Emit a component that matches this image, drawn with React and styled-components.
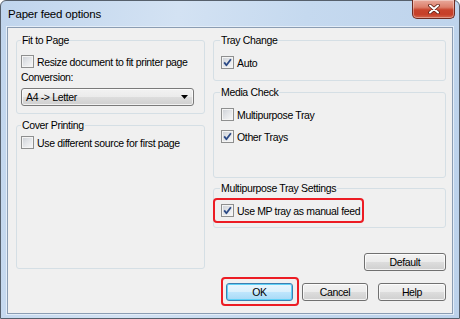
import React from 'react';
import styled, { createGlobalStyle } from 'styled-components';

const GlobalStyle = createGlobalStyle`
  html, body { margin: 0; padding: 0; background: #ffffff; }
  body { font-family: "Liberation Sans", Arial, sans-serif; color: #000; }
`;

const Window = styled.div`
  box-sizing: border-box;
  width: 460px;
  height: 319px;
  display: flex;
  flex-direction: column;
  border: 1px solid #56606c;
  border-radius: 6px 6px 0 0;
  background: linear-gradient(100deg, #c0d5ed 0%, #d3e2f3 35%, #c5d9ef 60%, #bcd2eb 100%);
`;

const TitleBar = styled.div`
  height: 26px;
  display: flex;
  justify-content: space-between;
  align-items: flex-start;
  padding-left: 7px;
  padding-right: 4px;
`;

const Title = styled.div`
  font-size: 11.5px;
  line-height: 12px;
  letter-spacing: -0.2px;
  margin-top: 7px;
`;

const CloseButton = styled.div`
  box-sizing: border-box;
  width: 43px;
  height: 19px;
  margin-top: -1px;
  display: flex;
  align-items: center;
  justify-content: center;
  border: 1px solid #6e2a20;
  border-top: none;
  border-radius: 0 0 5px 5px;
  background: linear-gradient(180deg, #e9a99b 0%, #dc7f6b 40%, #c8432c 55%, #c63f28 80%, #d5664c 100%);
  box-shadow: inset 0 0 0 1px rgba(255, 255, 255, 0.35);
`;

const Client = styled.div`
  flex: 1;
  margin: 0 6px 4px 6px;
  padding: 6px 6px 0 8px;
  background: #f0f0f0;
  border: 1px solid #8b9db3;
  box-shadow: 0 0 0 1px #e3edf8;
  display: flex;
  flex-direction: column;
`;

const Columns = styled.div`
  display: flex;
  gap: 8px;
`;

const Column = styled.div`
  width: ${p => p.$w}px;
  display: flex;
  flex-direction: column;
`;

const Group = styled.fieldset`
  box-sizing: border-box;
  min-width: 0;
  height: ${p => p.$h}px;
  margin: ${p => p.$mt || 0}px 0 0 0;
  padding: 0 6px 0 ${p => p.$pl}px;
  border: 1px solid #d5dfe5;
  border-radius: 3px;
`;

const Legend = styled.legend`
  padding: 0 1px;
  margin-left: ${p => p.$ml || 0}px;
  font-size: 10.5px;
  line-height: 12px;
  letter-spacing: -0.35px;
`;

const CheckRow = styled.div`
  display: flex;
  align-items: center;
  gap: 3px;
  height: 13px;
  margin-top: ${p => p.$mt || 0}px;
  font-size: 10.5px;
  letter-spacing: -0.35px;
  white-space: nowrap;
`;

const Box = styled.span`
  box-sizing: border-box;
  flex: none;
  width: 13px;
  height: 13px;
  border: 1px solid #8e8f8f;
  background: linear-gradient(135deg, #cbcfd5 0%, #e4e6e9 50%, #f8f8f8 100%);
  box-shadow: inset 0 0 0 1px #f4f4f4;
  svg { display: block; }
`;

const Highlight = styled.div`
  box-sizing: border-box;
  width: 151px;
  height: 25px;
  margin: 4px 0 0 -8px;
  padding-left: 6px;
  display: flex;
  align-items: center;
  border: 2px solid #ec1c24;
  border-radius: 4px;
`;

const FieldLabel = styled.div`
  margin-top: 3px;
  font-size: 10.5px;
  line-height: 12px;
  letter-spacing: -0.35px;
`;

const Select = styled.div`
  box-sizing: border-box;
  width: 173px;
  height: 18px;
  margin-top: 5px;
  padding: 0 5px 0 4px;
  display: flex;
  align-items: center;
  justify-content: space-between;
  font-size: 10.5px;
  letter-spacing: -0.35px;
  border: 1px solid #7a7a7a;
  border-radius: 3px;
  background: linear-gradient(180deg, #f2f2f2 0%, #ebebeb 50%, #dddddd 51%, #cfcfcf 100%);
  box-shadow: inset 0 0 0 1px rgba(255, 255, 255, 0.7);
`;

const Button = styled.button`
  box-sizing: border-box;
  width: ${p => p.$w}px;
  height: 18px;
  padding: 0;
  font-family: "Liberation Sans", Arial, sans-serif;
  font-size: 10.5px;
  letter-spacing: -0.35px;
  color: #000;
  border: 1px solid ${p => (p.$primary ? '#3c7fb1' : '#707070')};
  border-radius: 3px;
  background: ${p =>
    p.$primary
      ? 'linear-gradient(180deg, #eaf6fd 0%, #d9f0fc 50%, #bee6fd 51%, #a7d9f5 100%)'
      : 'linear-gradient(180deg, #f2f2f2 0%, #ebebeb 50%, #dddddd 51%, #cfcfcf 100%)'};
  box-shadow: inset 0 0 0 1px ${p => (p.$primary ? '#5fd1f7' : 'rgba(255, 255, 255, 0.75)')};
`;

const DefaultButton = styled(Button)`
  align-self: flex-end;
  margin-top: 25px;
`;

const Footer = styled.div`
  display: flex;
  justify-content: flex-end;
  align-items: center;
  gap: 10px;
  margin-top: 12px;
`;

const OkMark = styled.div`
  box-sizing: border-box;
  display: flex;
  align-items: center;
  padding: 0 4px 0 3px;
  height: 29px;
  margin: -6px -7px -5px 0;
  border: 2px solid #ec1c24;
  border-radius: 4px;
`;

const Checkbox = ({ checked, label, mt }) => (
  <CheckRow $mt={mt}>
    <Box>
      {checked && (
        <svg width="11" height="11" viewBox="0 0 11 11">
          <path d="M2.2 5.4 L4.4 8.2 L8.9 2.2" fill="none" stroke="#2c4a86" strokeWidth="1.8" strokeLinejoin="round" />
        </svg>
      )}
    </Box>
    <span>{label}</span>
  </CheckRow>
);

export default function App() {
  return (
    <>
      <GlobalStyle />
      <Window>
        <TitleBar>
          <Title>Paper feed options</Title>
          <CloseButton>
            <svg width="12" height="10" viewBox="0 0 12 10">
              <path d="M2 1.5 L10 8.5 M10 1.5 L2 8.5" stroke="#5b1c12" strokeWidth="3.6" strokeLinecap="round" />
              <path d="M2 1.5 L10 8.5 M10 1.5 L2 8.5" stroke="#ffffff" strokeWidth="2" strokeLinecap="round" />
            </svg>
          </CloseButton>
        </TitleBar>
        <Client>
          <Columns>
            <Column $w={189}>
              <Group $h={80} $pl={4}>
                <Legend>Fit to Page</Legend>
                <Checkbox mt={9} label="Resize document to fit printer page" />
                <FieldLabel>Conversion:</FieldLabel>
                <Select>
                  <span>A4 -&gt; Letter</span>
                  <svg width="7" height="4" viewBox="0 0 7 4">
                    <path d="M0 0 H7 L3.5 4 Z" fill="#000" />
                  </svg>
                </Select>
              </Group>
              <Group $h={150} $mt={5} $pl={4}>
                <Legend>Cover Printing</Legend>
                <Checkbox mt={5} label="Use different source for first page" />
              </Group>
            </Column>
            <Column $w={233}>
              <Group $h={47} $pl={7}>
                <Legend $ml={-1}>Tray Change</Legend>
                <Checkbox mt={10} checked label="Auto" />
              </Group>
              <Group $h={92} $mt={5} $pl={7}>
                <Legend $ml={-1}>Media Check</Legend>
                <Checkbox mt={10} label="Multipurpose Tray" />
                <Checkbox mt={9} checked label="Other Trays" />
              </Group>
              <Group $h={46} $mt={4} $pl={7}>
                <Legend $ml={-1}>Multipurpose Tray Settings</Legend>
                <Highlight>
                  <Checkbox checked label="Use MP tray as manual feed" />
                </Highlight>
              </Group>
              <DefaultButton $w={82}>Default</DefaultButton>
            </Column>
          </Columns>
          <Footer>
            <OkMark>
              <Button $w={67} $primary>OK</Button>
            </OkMark>
            <Button $w={66}>Cancel</Button>
            <Button $w={68}>Help</Button>
          </Footer>
        </Client>
      </Window>
    </>
  );
}
